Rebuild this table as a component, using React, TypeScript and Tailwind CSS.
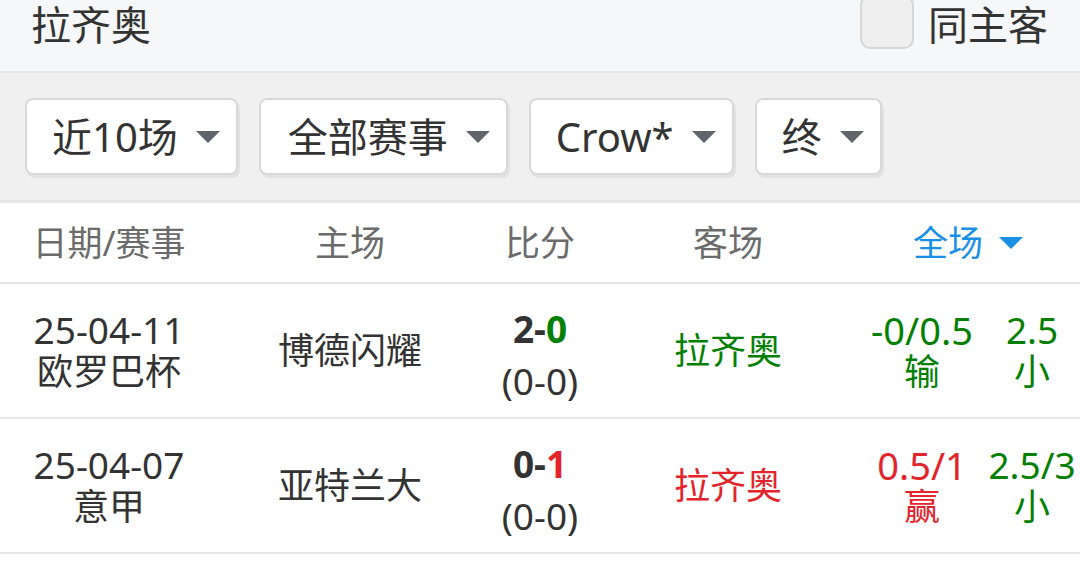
const FONT = "font-['Noto_Sans','Noto_Sans_CJK_SC',sans-serif]";

const GREEN = "text-[#038003]";
const RED = "text-[#e3242b]";

type Match = {
  date: string;
  comp: string;
  home: string;
  homeGoals: string;
  awayGoals: string;
  half: string;
  away: string;
  awayRed: boolean;
  hcap: string;
  hcapRes: string;
  hcapRed: boolean;
  ou: string;
  ouRes: string;
};

const matches: Match[] = [
  {
    date: "25-04-11",
    comp: "欧罗巴杯",
    home: "博德闪耀",
    homeGoals: "2",
    awayGoals: "0",
    half: "(0-0)",
    away: "拉齐奥",
    awayRed: false,
    hcap: "-0/0.5",
    hcapRes: "输",
    hcapRed: false,
    ou: "2.5",
    ouRes: "小",
  },
  {
    date: "25-04-07",
    comp: "意甲",
    home: "亚特兰大",
    homeGoals: "0",
    awayGoals: "1",
    half: "(0-0)",
    away: "拉齐奥",
    awayRed: true,
    hcap: "0.5/1",
    hcapRes: "赢",
    hcapRed: true,
    ou: "2.5/3",
    ouRes: "小",
  },
];

function Caret({ className }: { className: string }) {
  return (
    <svg width="24" height="12" viewBox="0 0 24 12" className={className}>
      <path d="M0 0h24L12 12z" fill="currentColor" />
    </svg>
  );
}

function FilterButton({ label, pl }: { label: string; pl: string }) {
  return (
    <div
      className={`flex h-[77px] items-center gap-[18px] rounded-[8px] border-2 border-[#d9d9d9] bg-white pr-[16px] shadow-[2px_3px_0_#e2e2e2] ${pl}`}
    >
      <span className="text-[40px] leading-none text-[#333]">{label}</span>
      <Caret className="text-[#62646b]" />
    </div>
  );
}

export default function App() {
  return (
    <div className={`${FONT} h-[572px] w-[1080px] overflow-hidden bg-white`}>
      {/* team title bar */}
      <div className="h-[73px] border-b-2 border-[#e6e6e6] bg-[#f6f7f9]">
        <div className="flex h-[50px] items-center justify-between pl-[31px] pr-[32px]">
          <span className="text-[40px] leading-none text-[#333]">拉齐奥</span>
          <div className="-mt-[6px] flex items-center gap-[14px]">
            <div className="h-[54px] w-[54px] rounded-[10px] border-2 border-[#d6d6d6] bg-[#efefef]" />
            <span className="mt-[6px] text-[40px] leading-none text-[#333]">同主客</span>
          </div>
        </div>
      </div>

      {/* filters */}
      <div className="flex h-[130px] gap-[21px] border-b-[3px] border-[#e6e6e6] bg-[#f0f0f0] pl-[25px] pt-[25px]">
        <FilterButton label="近10场" pl="pl-[25px]" />
        <FilterButton label="全部赛事" pl="pl-[27px]" />
        <FilterButton label="Crow*" pl="pl-[25px]" />
        <FilterButton label="终" pl="pl-[25px]" />
      </div>

      {/* table header */}
      <div className="grid h-[81px] grid-cols-[218px_264px_116px_260px_1fr] items-center border-b-2 border-[#e6e6e6] text-[35px] leading-none text-[#6b6b6b]">
        <div className="text-center">日期/赛事</div>
        <div className="text-center">主场</div>
        <div className="text-center">比分</div>
        <div className="text-center">客场</div>
        <div className="flex items-center justify-center gap-[16px] pr-[2px] text-[#1a8fe6]">
          <span>全场</span>
          <Caret className="text-[#1a8fe6]" />
        </div>
      </div>

      {/* rows */}
      {matches.map((m) => (
        <div
          key={m.date}
          className="grid h-[135px] grid-cols-[218px_264px_116px_260px_1fr] items-center border-b-2 border-[#e6e6e6] text-[36px] text-[#333]"
        >
          <div className="text-center leading-[42px]">
            <div className="text-[37px]">{m.date}</div>
            <div>{m.comp}</div>
          </div>
          <div className="text-center leading-none">{m.home}</div>
          <div className="pt-[8px] text-center text-[37px] leading-[42px]">
            <div className="font-bold">
              {m.homeGoals}-<span className={m.awayRed ? RED : GREEN}>{m.awayGoals}</span>
            </div>
            <div className="mt-[10px]">{m.half}</div>
          </div>
          <div className={`text-center leading-none ${m.awayRed ? RED : GREEN}`}>{m.away}</div>
          <div className="grid grid-cols-[128px_92px] leading-[42px]">
            <div className={`text-center ${m.hcapRed ? RED : GREEN}`}>
              <div className="text-[38px]">{m.hcap}</div>
              <div>{m.hcapRes}</div>
            </div>
            <div className={`whitespace-nowrap text-center ${GREEN}`}>
              <div className="text-[37px]">{m.ou}</div>
              <div>{m.ouRes}</div>
            </div>
          </div>
        </div>
      ))}
    </div>
  );
}
